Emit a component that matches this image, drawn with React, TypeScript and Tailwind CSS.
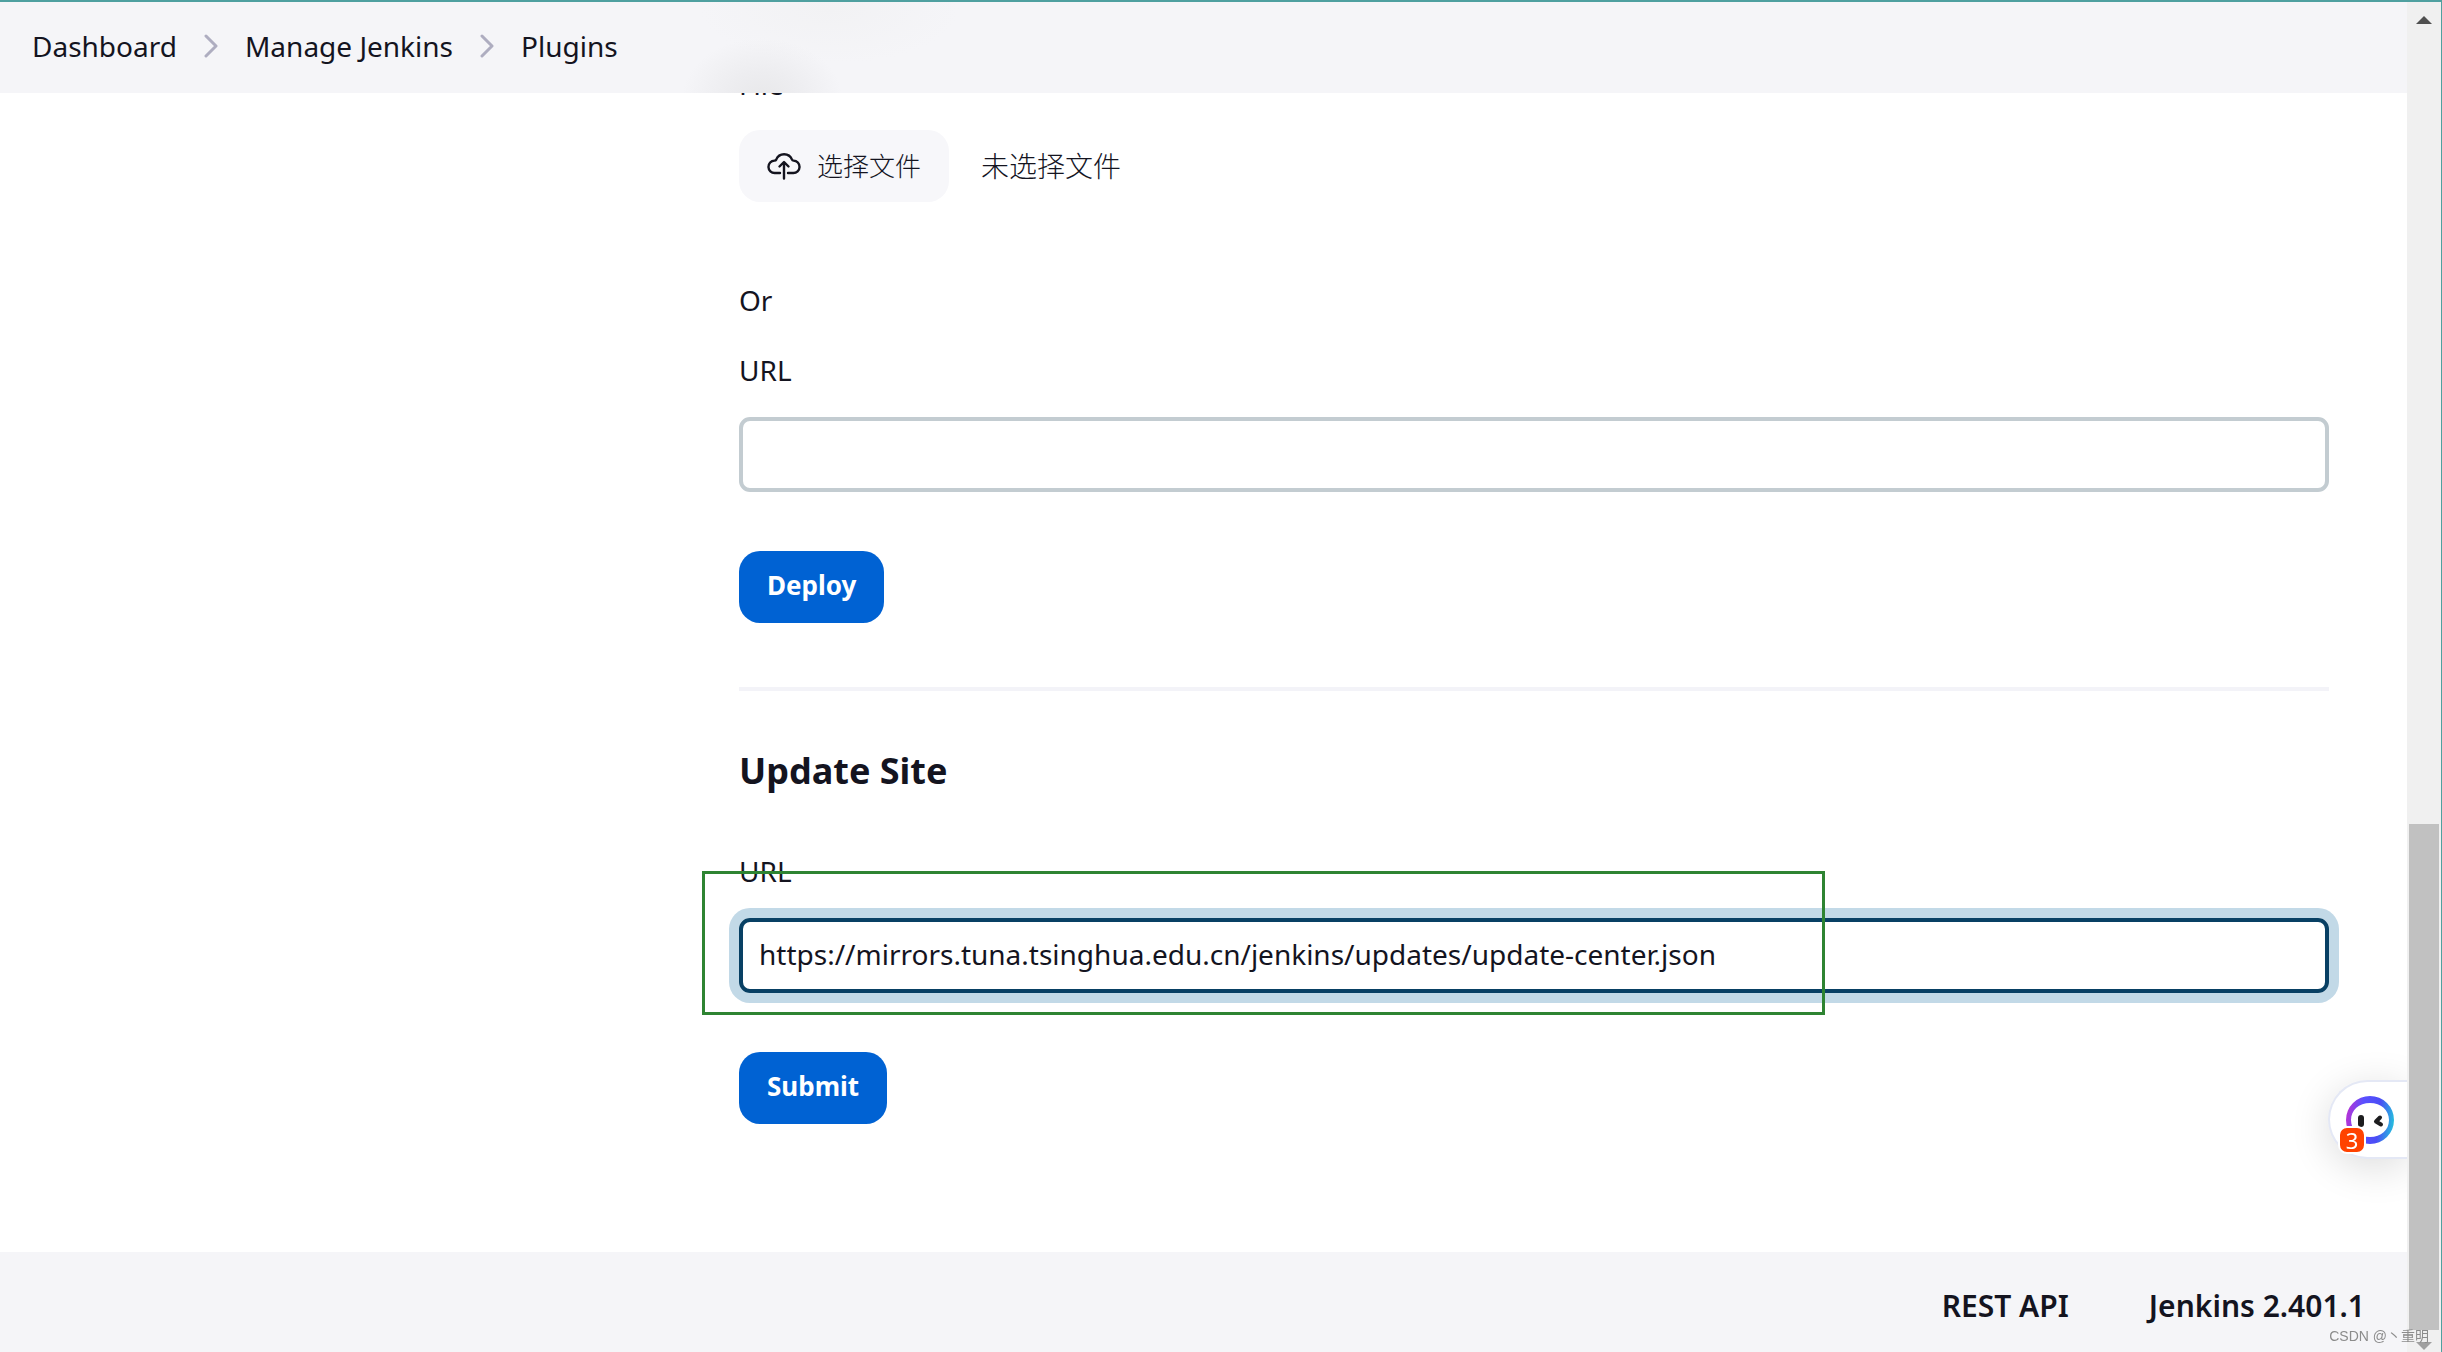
const crumbs = ['Dashboard', 'Manage Jenkins', 'Plugins'];

const primaryButton =
  'h-18 px-7 pb-1 rounded-[21px] bg-[#0062d3] text-[26px] leading-none font-bold text-white';

const textInput = 'mt-[27px] block h-[75px] w-full rounded-[11px] border-4 px-4 pb-1 outline-none';

function Breadcrumbs() {
  return (
    <header className="fixed top-0 left-0 right-[35px] z-10 h-[93px] border-t-2 border-[#4fa0a0] bg-[#f5f5f8] overflow-hidden">
      <div className="absolute -top-12 left-[700px] h-[110px] w-[260px] rounded-full bg-[radial-gradient(closest-side,#f2f2f4,#f5f5f8)]" />
      <div className="absolute top-9 left-[682px] h-[120px] w-[160px] rounded-full bg-[radial-gradient(closest-side,#e8e8ea,#ededf0_45%,transparent)]" />
      <nav aria-label="Breadcrumb" className="relative h-full px-8 pb-1">
        <ol className="flex h-full items-center gap-[26px]">
          {crumbs.map((crumb, i) => (
            <li key={crumb} className="flex items-center gap-[26px]">
              {i > 0 && (
                <svg className="h-6 w-4" viewBox="0 0 16 24" fill="none" stroke="#aeadc0" strokeWidth="3" strokeLinecap="round" strokeLinejoin="round">
                  <path d="M3 2l10 10L3 22" />
                </svg>
              )}
              <a href="#">{crumb}</a>
            </li>
          ))}
        </ol>
      </nav>
    </header>
  );
}

function UploadIcon() {
  return (
    <svg className="h-8 w-[34px]" viewBox="1 0 34 32" fill="none" stroke="#14141f" strokeWidth="2.4" strokeLinecap="round" strokeLinejoin="round">
      <path d="M14 23H8.800a6.200 6.200 0 0 1-.3-12.400c.8 0 1.300-.2 1.700-1a8.500 8.500 0 0 1 15.800 0c.3.800.8 1 1.500 1a6.200 6.200 0 0 1-.3 12.400H22" />
      <path d="M18 28.500V12.500M13.500 16.500l4.500-4.500 4.500 4.500" />
    </svg>
  );
}

function Assistant() {
  return (
    <button
      aria-label="Assistant"
      className="fixed right-[35px] bottom-[193px] h-[79px] w-[79px] rounded-l-full border-2 border-r-0 border-[#e4e8f5] bg-white shadow-[0_8px_40px_rgba(0,0,0,0.14)] [clip-path:inset(-60px_0_-60px_-60px)]"
    >
      <svg className="ml-4 size-12" viewBox="0 0 48 48">
        <defs>
          <linearGradient id="ring" x1="0" y1="0.7" x2="1" y2="0.8">
            <stop offset="0" stopColor="#b035d8" />
            <stop offset="0.3" stopColor="#5a50ff" />
            <stop offset="0.65" stopColor="#4a4df5" />
            <stop offset="1" stopColor="#22c8dc" />
          </linearGradient>
        </defs>
        <path
          fill="url(#ring)"
          fillRule="evenodd"
          d="M24 0a24 24 0 1 1 0 48a24 24 0 1 1 0-48zM24 7C13 7 5 14 5 24s8 17 19 17 19-7 19-17S35 7 24 7z"
        />
        <rect x="12" y="19" width="6" height="12" rx="3" fill="#1d1d1f" />
        <path d="M34 21.500L30 25.500l5 3" fill="none" stroke="#1d1d1f" strokeWidth="4" strokeLinecap="round" strokeLinejoin="round" />
      </svg>
      <span className="absolute top-[44px] left-2 flex size-7 items-center justify-center rounded-[9px] border-2 border-white bg-[#ff4200] text-[22px] leading-none text-white">
        3
      </span>
    </button>
  );
}

function Scrollbar() {
  return (
    <div aria-hidden="true" className="fixed inset-y-0 right-0 flex w-[35px] flex-col items-center border-t-2 border-r border-[#4fa0a0] bg-[#f0f0f0]">
      <svg className="mt-[14px] h-2 w-4" viewBox="0 0 16 8">
        <path d="M8 0l8 8H0z" fill="#505050" />
      </svg>
      <div className="mt-[800px] w-[30px] grow bg-[#c1c1c1]" />
      <svg className="mt-3 mb-0.5 h-2 w-4" viewBox="0 0 16 8">
        <path d="M0 0h16L8 8z" fill="#a0a0a0" />
      </svg>
    </div>
  );
}

export default function App() {
  return (
    <div className="flex h-screen flex-col overflow-hidden bg-white pr-[35px] font-['Noto_Sans','Noto_Sans_CJK_SC',sans-serif] text-[28px] leading-[40px] text-[#14141f]">
      <Breadcrumbs />

      <main className="ml-[739px] mr-[78px] grow pt-16">
        <form onSubmit={(e) => e.preventDefault()}>
          <label htmlFor="plugin-file" className="block">File</label>
          <div className="mt-[26px] flex items-center gap-8">
            <button
              id="plugin-file"
              type="button"
              className="flex h-18 items-center gap-4 rounded-[21px] bg-[#f7f7fa] px-7 text-[26px] font-light"
            >
              <UploadIcon />
              选择文件
            </button>
            <span className="font-light">未选择文件</span>
          </div>
          <p className="mt-[78px]">Or</p>
          <label htmlFor="plugin-url" className="mt-[30px] block">URL</label>
          <input id="plugin-url" type="text" className={`${textInput} border-[#c3ccd1]`} />
          <button type="submit" className={`mt-[59px] block ${primaryButton}`}>Deploy</button>
        </form>

        <hr className="mt-16 border-t-4 border-[#f3f3f8]" />

        <form onSubmit={(e) => e.preventDefault()}>
          <h2 className="mt-14 text-[36px] leading-[48px] font-bold">Update Site</h2>
          <div className="relative mt-14">
            <label htmlFor="site-url" className="block">URL</label>
            <input
              id="site-url"
              type="text"
              defaultValue="https://mirrors.tuna.tsinghua.edu.cn/jenkins/updates/update-center.json"
              className={`${textInput} border-[#084064] ring-10 ring-[#c2d9e7]`}
            />
            <div className="pointer-events-none absolute -left-[37px] top-5 h-[144px] w-[1123px] border-3 border-[#2e8432]" />
          </div>
          <button type="submit" className={`mt-[59px] block ${primaryButton}`}>Submit</button>
        </form>
      </main>

      <footer className="flex h-[100px] shrink-0 items-center justify-end gap-20 bg-[#f5f5f8] pt-2 pr-[42px] text-[30px] font-semibold">
        <a href="#">REST API</a>
        <a href="#">Jenkins 2.401.1</a>
      </footer>

      <Assistant />
      <Scrollbar />
      <span className="fixed right-[13px] bottom-1.5 font-['Liberation_Sans','Noto_Sans_CJK_SC',sans-serif] text-[14px] leading-5 text-[#8c8c8c]">CSDN @丶重明</span>
    </div>
  );
}
